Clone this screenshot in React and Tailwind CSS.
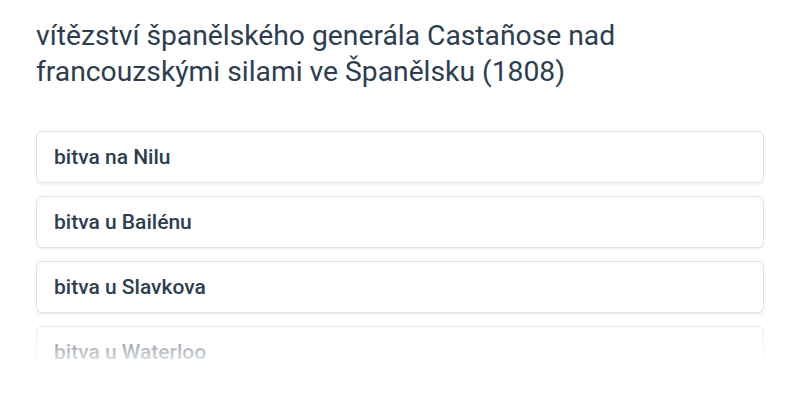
const OPTIONS = ["bitva na Nilu", "bitva u Bailénu", "bitva u Slavkova", "bitva u Waterloo"]

export default function App() {
  return (
    <div
      className="min-h-[400px] bg-white px-9 pt-[18px]"
      style={{ fontFamily: "Roboto, 'Noto Sans', sans-serif" }}
    >
      <p className="text-[28.25px] leading-9 text-[#2c3e50]">
        vítězství španělského generála Castañose nad francouzskými silami ve Španělsku (1808)
      </p>
      <div className="relative mt-10 h-[240px] overflow-hidden">
        <ul className="flex flex-col gap-[13px] pt-px">
          {OPTIONS.map((o) => (
            <li
              key={o}
              className="rounded-md border border-[#e3e3e3] bg-white px-[17px] py-[11px] text-[21px] leading-7 font-medium text-[#2c3e50] shadow-[0_1px_3px_rgba(0,0,0,0.08)]"
            >
              {o}
            </li>
          ))}
        </ul>
        <div className="pointer-events-none absolute inset-x-0 bottom-0 h-[58px] bg-gradient-to-b from-white/0 to-white" />
      </div>
    </div>
  )
}
